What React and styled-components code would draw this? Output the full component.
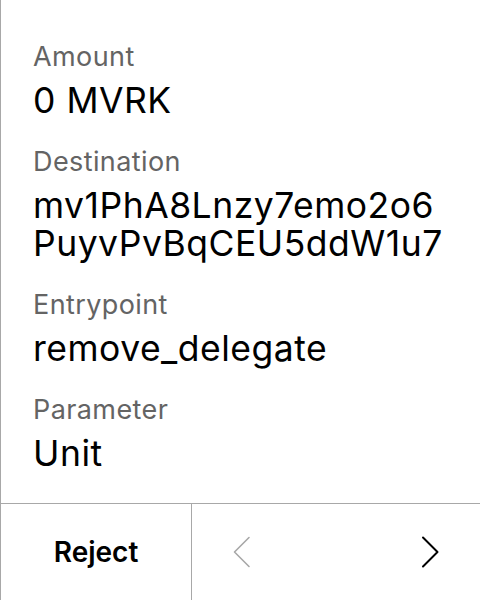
import { createGlobalStyle, styled } from "styled-components";

const GlobalStyle = createGlobalStyle`
  html, body {
    margin: 0;
    padding: 0;
    background: #ffffff;
  }
  body {
    font-family: Inter, "Noto Sans", sans-serif;
  }
`;

const StScreen = styled.div`
  width: 480px;
  height: 600px;
  box-sizing: border-box;
  border-left: 1px solid #a8a8a8;
  display: flex;
  flex-direction: column;
  background: #ffffff;
`;

const StBody = styled.div`
  flex: 1;
  padding: 41px 20px 0 32px;
`;

const StField = styled.div`
  margin-bottom: 26px;
`;

const StLabel = styled.div`
  font-size: 27px;
  line-height: 32px;
  letter-spacing: 0.4px;
  color: #646464;
  margin-bottom: 9px;
`;

const StValue = styled.div`
  font-size: 35.5px;
  line-height: 38px;
  letter-spacing: 0.5px;
  color: #000000;
  white-space: nowrap;
`;

const StLine = styled.span`
  display: block;
`;

const StFooter = styled.div`
  height: 96px;
  border-top: 1px solid #a8a8a8;
  display: flex;
`;

const StRejectBtn = styled.button`
  width: 191px;
  border: none;
  border-right: 1px solid #a8a8a8;
  background: none;
  font-family: inherit;
  font-size: 28px;
  font-weight: 600;
  color: #000000;
  padding: 0;
`;

const StNav = styled.div`
  flex: 1;
  display: flex;
  align-items: center;
  justify-content: space-between;
  padding: 0 41px 0 41px;
`;

const StArrow = styled.svg`
  width: 18px;
  height: 32px;
  display: block;
`;

const Chevron = ({ dir, color, width }) => (
  <StArrow viewBox="0 0 18 32">
    <polyline
      points={dir === "left" ? "16,1.5 1.5,16 16,30.5" : "2,1.5 16.5,16 2,30.5"}
      fill="none"
      stroke={color}
      strokeWidth={width}
      strokeLinecap="round"
      strokeLinejoin="round"
    />
  </StArrow>
);

function App() {
  const fields = [
    { label: "Amount", lines: ["0 MVRK"] },
    { label: "Destination", lines: ["mv1PhA8Lnzy7emo2o6", "PuyvPvBqCEU5ddW1u7"] },
    { label: "Entrypoint", lines: ["remove_delegate"] },
    { label: "Parameter", lines: ["Unit"] },
  ];

  return (
    <>
      <GlobalStyle />
      <StScreen>
        <StBody>
          {fields.map((f) => (
            <StField key={f.label}>
              <StLabel>{f.label}</StLabel>
              <StValue>
                {f.lines.map((line) => (
                  <StLine key={line}>{line}</StLine>
                ))}
              </StValue>
            </StField>
          ))}
        </StBody>
        <StFooter>
          <StRejectBtn>Reject</StRejectBtn>
          <StNav>
            <Chevron dir="left" color="#a8a8a8" width={1.6} />
            <Chevron dir="right" color="#000000" width={2} />
          </StNav>
        </StFooter>
      </StScreen>
    </>
  );
}

export default App;
